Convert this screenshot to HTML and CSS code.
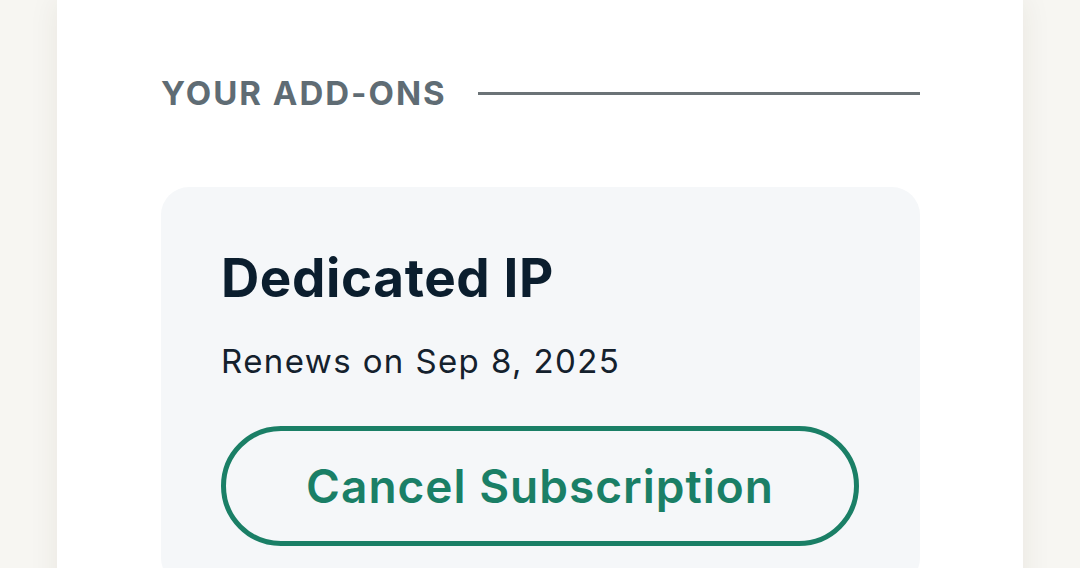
FILE: index.html
```html
<!DOCTYPE html>
<html lang="en">
<head>
    <meta charset="UTF-8">
    <meta name="viewport" content="width=device-width, initial-scale=1.0">
    <title>Your Add-ons</title>
    <link rel="stylesheet" href="styles.css">
</head>
<body>
    <main class="panel">
        <div class="section-head">
            <h2>YOUR ADD-ONS</h2>
            <span class="rule"></span>
        </div>

        <div class="addon">
            <h3>Dedicated IP</h3>
            <p class="renew">Renews on Sep 8, 2025</p>
            <button class="cancel">Cancel Subscription</button>
        </div>
    </main>
</body>
</html>
```

FILE: styles.css
```css
body {
    margin: 0;
    padding: 0;
    background-color: #f7f6f2;
    font-family: Inter, "Noto Sans", sans-serif;
    height: 568px;
    overflow: hidden;
}

.panel {
    width: 966px;
    margin-left: 57px;
    min-height: 700px;
    background-color: #ffffff;
    box-shadow: 0 0 28px rgba(60, 50, 30, 0.08);
    padding: 73px 103px 0 104px;
    box-sizing: border-box;
}

.section-head {
    display: flex;
    align-items: center;
    gap: 31px;
    height: 40px;
}

.section-head h2 {
    margin: 0;
    font-size: 33px;
    font-weight: 700;
    color: #5f6c74;
    letter-spacing: 2px;
}

.rule {
    flex: 1;
    height: 3px;
    background-color: #6b7377;
}

.addon {
    margin-top: 74px;
    background-color: #f5f7f9;
    border-radius: 28px;
    padding: 62px 61px 40px 60px;
}

.addon h3 {
    margin: 0;
    font-size: 53px;
    font-weight: 700;
    line-height: 58px;
    letter-spacing: 0.6px;
    color: #0b1e2e;
}

.renew {
    margin: 34px 0 0;
    font-size: 33px;
    line-height: 40px;
    letter-spacing: 1.4px;
    color: #14212d;
}

.cancel {
    display: block;
    width: 100%;
    margin-top: 45px;
    height: 120px;
    border: 5px solid #1a7f66;
    border-radius: 60px;
    background: transparent;
    font-family: Inter, "Noto Sans", sans-serif;
    font-size: 46px;
    font-weight: 600;
    letter-spacing: 1px;
    color: #1a7f66;
    cursor: pointer;
}
```
